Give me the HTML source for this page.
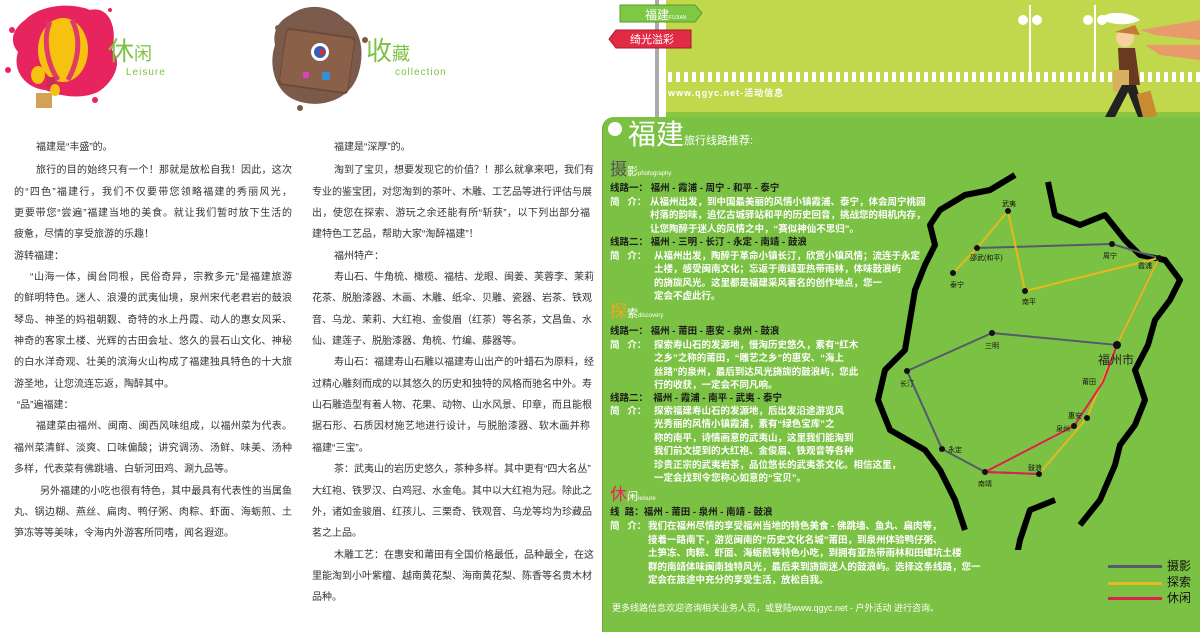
<!DOCTYPE html>
<html><head><meta charset="utf-8">
<style>
*{margin:0;padding:0;box-sizing:border-box}
body{width:1200px;height:632px;position:relative;overflow:hidden;background:#fff;font-family:"Liberation Sans","Noto Sans CJK SC",sans-serif}
.col{position:absolute;font-size:10px;color:#333;line-height:21.35px;width:278px}
.col div{white-space:nowrap}
.col .j{text-align:justify;text-align-last:justify}
.col .i{padding-left:22px}
.ab{position:absolute;white-space:nowrap}
.r{position:absolute;white-space:nowrap;font-size:9.5px;line-height:13.4px;color:#fff;font-weight:bold}
.k{color:#1a1a1a}
</style></head><body>

<svg class="ab" style="left:0;top:0" width="600" height="130">
 <path d="M25 20 C40 5 70 2 90 10 C110 5 118 30 112 50 C125 65 110 85 98 92 C80 100 60 96 45 90 C25 88 12 70 18 52 C8 40 14 28 25 20Z" fill="#e8245f"/>
 <circle cx="12" cy="30" r="3" fill="#e8245f"/><circle cx="110" cy="10" r="2" fill="#e8245f"/><circle cx="8" cy="70" r="3" fill="#e8245f"/><circle cx="95" cy="100" r="3" fill="#e8245f"/>
 <ellipse cx="63" cy="50" rx="25" ry="32" fill="#f7c20f"/>
 <path d="M50 22 C42 40 48 65 58 80 M72 20 C82 40 78 62 68 80" stroke="#e03a6b" stroke-width="5" fill="none"/>
 <rect x="47" y="77" width="8" height="10" fill="#c62d55"/>
 <rect x="36" y="93" width="16" height="15" fill="#d4a155"/>
 <ellipse cx="38" cy="75" rx="7" ry="9" fill="#f7c20f"/><ellipse cx="55" cy="90" rx="5" ry="6" fill="#f7c20f"/>
 <path d="M290 15 C310 0 335 8 345 20 C362 28 365 55 358 75 C350 100 320 110 295 100 C275 92 268 65 275 45 C272 30 280 20 290 15Z" fill="#7a5a4a"/>
 <circle cx="278" cy="28" r="3" fill="#7a5a4a"/><circle cx="365" cy="40" r="3" fill="#7a5a4a"/><circle cx="300" cy="108" r="3" fill="#7a5a4a"/>
 <rect x="282" y="32" width="70" height="58" rx="4" fill="#6e4a38" transform="rotate(8 317 61)"/>
 <rect x="283" y="34" width="68" height="54" rx="4" fill="#8a6148" transform="rotate(8 317 61)"/>
 <circle cx="320" cy="52" r="9" fill="#fff"/><circle cx="320" cy="52" r="6" fill="#3060c0"/><circle cx="322" cy="52" r="3" fill="#d03030"/>
 <rect x="322" y="72" width="8" height="8" fill="#3a8ed8"/><rect x="303" y="72" width="6" height="6" fill="#e040c0"/>
</svg>
<div class="ab" style="left:108px;top:36px;font-size:26px;color:#7dc242;line-height:30px">休<span style="font-size:18px">闲</span></div>
<div class="ab" style="left:126px;top:67px;font-size:10px;color:#7dc242;letter-spacing:1px">Leisure</div>
<div class="ab" style="left:366px;top:36px;font-size:26px;color:#7dc242;line-height:30px">收<span style="font-size:18px">藏</span></div>
<div class="ab" style="left:395px;top:67px;font-size:10px;color:#7dc242;letter-spacing:1px">collection</div>

<div class="col" style="left:14px;top:137px">
<div class="i">福建是“丰盛”的。</div>
<div class="i j" style="margin-top:2px">旅行的目的始终只有一个！那就是放松自我！因此，这次</div>
<div class="j">的“四色”福建行，我们不仅要带您领略福建的秀丽风光，</div>
<div class="j">更要带您“尝遍”福建当地的美食。就让我们暂时放下生活的</div>
<div>疲惫，尽情的享受旅游的乐趣！</div>
<div>游转福建：</div>
<div class="j" style="padding-left:16px">“山海一体，闽台同根，民俗奇异，宗教多元”是福建旅游</div>
<div class="j">的鲜明特色。迷人、浪漫的武夷仙境，泉州宋代老君岩的鼓浪</div>
<div class="j">琴岛、神圣的妈祖朝觐、奇特的水上丹霞、动人的惠女风采、</div>
<div class="j">神奇的客家土楼、光辉的古田会址、悠久的昙石山文化、神秘</div>
<div class="j">的白水洋奇观、壮美的滨海火山构成了福建独具特色的十大旅</div>
<div>游圣地，让您流连忘返，陶醉其中。</div>
<div>&nbsp;“品”遍福建：</div>
<div class="i j">福建菜由福州、闽南、闽西风味组成，以福州菜为代表。</div>
<div class="j">福州菜清鲜、淡爽、口味偏酸；讲究调汤、汤鲜、味美、汤种</div>
<div>多样，代表菜有佛跳墙、白斩河田鸡、涮九品等。</div>
<div class="j" style="padding-left:26px">另外福建的小吃也很有特色，其中最具有代表性的当属鱼</div>
<div class="j">丸、锅边糊、燕丝、扁肉、鸭仔粥、肉粽、虾面、海蛎煎、土</div>
<div>笋冻等等美味，令海内外游客所同嗜，闻名遐迩。</div>
</div>

<div class="col" style="left:312px;top:137px">
<div class="i">福建是“深厚”的。</div>
<div class="i j" style="margin-top:2px">淘到了宝贝，想要发现它的价值？！那么就拿来吧，我们有</div>
<div class="j">专业的鉴宝团，对您淘到的茶叶、木雕、工艺品等进行评估与展</div>
<div class="j">出，使您在探索、游玩之余还能有所“斩获”，以下列出部分福</div>
<div>建特色工艺品，帮助大家“淘醉福建”！</div>
<div class="i">福州特产：</div>
<div class="i j">寿山石、牛角梳、橄榄、福桔、龙眼、闽姜、芙蓉李、茉莉</div>
<div class="j">花茶、脱胎漆器、木画、木雕、纸伞、贝雕、瓷器、岩茶、铁观</div>
<div class="j">音、乌龙、茉莉、大红袍、金俊眉（红茶）等名茶，文昌鱼、水</div>
<div>仙、建莲子、脱胎漆器、角梳、竹编、藤器等。</div>
<div class="i j">寿山石：福建寿山石雕以福建寿山出产的叶蜡石为原料，经</div>
<div class="j">过精心雕刻而成的以其悠久的历史和独特的风格而驰名中外。寿</div>
<div class="j">山石雕造型有着人物、花果、动物、山水风景、印章，而且能根</div>
<div class="j">据石形、石质因材施艺地进行设计，与脱胎漆器、软木画并称</div>
<div>福建“三宝”。</div>
<div class="i j">茶：武夷山的岩历史悠久，茶种多样。其中更有“四大名丛”</div>
<div class="j">大红袍、铁罗汉、白鸡冠、水金龟。其中以大红袍为冠。除此之</div>
<div class="j">外，诸如金骏眉、红孩儿、三栗奇、铁观音、乌龙等均为珍藏品</div>
<div>茗之上品。</div>
<div class="i j">木雕工艺：在惠安和莆田有全国价格最低，品种最全，在这</div>
<div class="j">里能淘到小叶紫檀、越南黄花梨、海南黄花梨、陈香等名贵木材</div>
<div>品种。</div>
</div>

<div class="ab" style="left:666px;top:0;width:534px;height:117px;background:#c2d84c"></div>
<div class="ab" style="left:666px;top:112px;width:534px;height:6px;background:#8cc63f"></div>
<div class="ab" style="left:668px;top:72px;width:532px;height:10px;background:repeating-linear-gradient(90deg,#fff 0 4px,transparent 4px 8px)"></div>
<div class="ab" style="left:668px;top:86px;font-size:9px;color:#fff;letter-spacing:1px;font-weight:bold">www.qgyc.net-活动信息</div>
<div class="ab" style="left:655px;top:0;width:4px;height:117px;background:#aaa"></div>
<svg class="ab" style="left:600px;top:0" width="600" height="118">
 <path d="M20 5 H95 L102 13 L95 22 H20Z" fill="#7ec843" stroke="#5a9a30"/>
 <path d="M91 30 H16 L9 39 L16 48 H91Z" fill="#e32a45" stroke="#a01a30"/>
 <g stroke="#fff" stroke-width="2" fill="#fff">
  <line x1="430" y1="5" x2="430" y2="72"/><line x1="495" y1="5" x2="495" y2="72"/>
  <circle cx="423" cy="20" r="4"/><circle cx="437" cy="20" r="4"/><circle cx="488" cy="20" r="4"/><circle cx="502" cy="20" r="4"/>
 </g>
 <path d="M500 18 C510 10 530 12 540 20 C530 26 510 26 500 18Z" fill="#fff"/>
 <path d="M540 30 L600 20 L600 40 L555 35Z M545 45 L600 45 L600 60 L560 55Z" fill="#e89a6a"/>
 <circle cx="525" cy="38" r="9" fill="#f7d2a0"/>
 <path d="M515 32 L535 25 L540 35Z" fill="#c47a3a"/>
 <path d="M518 48 L535 48 L540 85 L520 85Z" fill="#6a3a20"/>
 <rect x="513" y="70" width="16" height="22" fill="#d8b060"/>
 <path d="M522 85 L505 117 L515 117 L528 92 L538 117 L546 117 L536 85Z" fill="#222"/>
 <rect x="540" y="92" width="14" height="26" fill="#c98a30" transform="rotate(-15 547 105)"/>
</svg>
<div class="ab" style="left:645px;top:6px;font-size:12px;color:#fff">福建<span style="font-size:5px">FUJIAN</span></div>
<div class="ab" style="left:630px;top:31px;font-size:11px;color:#fff">绮光溢彩</div>

<div class="ab" style="left:602px;top:117px;width:598px;height:515px;background:#7bc143;border-radius:12px 0 0 0;border-left:1px solid #6aa33a"></div>

<svg class="ab" style="left:870px;top:170px" width="330" height="380">
 <g fill="none" stroke="#000" stroke-width="6" stroke-linejoin="round">
  <path d="M145 5 L120 20 L95 25 L70 40 L60 55 L65 75 L55 95 L45 120 L40 150 L35 180 L15 200 L8 230 L20 260 L55 280 L70 300 L85 330 L95 360"/>
  <path d="M178 12 L185 45 L210 55 L235 45 L255 70 L270 85 L295 90 L310 110 L300 130 L285 150 L278 175 L265 200 L275 230 L265 255 L250 275 L245 295 L230 330 L210 355"/>
  <path d="M140 420 L150 370 L160 340 L185 330"/>
 </g>
 <g fill="none" stroke-width="2">
  <polyline stroke="#555b6a" points="107,78 242,74 289,88 247,175 122,163 37,201 72,279 115,302 169,304"/>
  <polyline stroke="#e8b820" points="83,103 107,78 138,41 155,121 289,88 247,175 217,248 169,304"/>
  <polyline stroke="#e02050" points="247,175 233,212 204,256 115,302 169,304"/>
 </g>
 <g fill="#111"><circle cx="138" cy="41" r="3"/><circle cx="107" cy="78" r="3"/><circle cx="83" cy="103" r="3"/><circle cx="155" cy="121" r="3"/><circle cx="242" cy="74" r="3"/><circle cx="289" cy="88" r="3"/><circle cx="122" cy="163" r="3"/><circle cx="247" cy="175" r="4"/><circle cx="37" cy="201" r="3"/><circle cx="217" cy="248" r="3"/><circle cx="204" cy="256" r="3"/><circle cx="72" cy="279" r="3"/><circle cx="115" cy="302" r="3"/><circle cx="169" cy="304" r="3"/></g>
 <g font-size="7" fill="#111" font-family="Liberation Sans,Noto Sans CJK SC,sans-serif">
  <text x="132" y="36">武夷</text><text x="100" y="90">邵武(和平)</text><text x="80" y="117">泰宁</text><text x="152" y="134">南平</text><text x="233" y="88">周宁</text><text x="268" y="98">霞浦</text><text x="115" y="178">三明</text><text x="30" y="216">长汀</text><text x="212" y="214">莆田</text><text x="198" y="248">惠安</text><text x="186" y="261">泉州</text><text x="78" y="282">永定</text><text x="108" y="316">南靖</text><text x="158" y="300">鼓浪</text>
  <text x="228" y="194" font-size="12" fill="#222">福州市</text>
 </g>
</svg>

<div class="ab" style="left:608px;top:122px;width:14px;height:14px;border-radius:50%;background:#fff"></div>
<div class="ab" style="left:628px;top:117px;font-size:28px;color:#fff;line-height:36px">福建<span style="font-size:11px">旅行线路推荐:</span></div>
<div class="ab" style="left:610px;top:160px;font-size:17px;color:#555;line-height:20px">摄<span style="font-size:11px;color:#fff">影<span style="font-size:6px">photography</span></span></div>

<div class="r k" style="left:610px;top:182px">线路一：&nbsp;福州 - 霞浦 - 周宁 - 和平 - 泰宁</div>
<div class="r" style="left:610px;top:196px">简&nbsp;&nbsp;&nbsp;介：</div>
<div class="r" style="left:650px;top:196px">从福州出发，到中国最美丽的风情小镇霞浦、泰宁，体会周宁桃园<br>村落的韵味，追忆古城驿站和平的历史回音，挑战您的相机内存，<br>让您陶醉于迷人的风情之中，“赛似神仙不思归”。</div>
<div class="r k" style="left:610px;top:236px">线路二：&nbsp;福州 - 三明 - 长汀 - 永定 - 南靖 - 鼓浪</div>
<div class="r" style="left:610px;top:250px">简&nbsp;&nbsp;&nbsp;介：</div>
<div class="r" style="left:654px;top:250px">从福州出发，陶醉于革命小镇长汀，欣赏小镇风情；流连于永定<br>土楼，感受闽南文化；忘返于南靖亚热带雨林，体味鼓浪屿<br>的旖旎风光。这里都是福建采风著名的创作地点，您一<br>定会不虚此行。</div>

<div class="ab" style="left:610px;top:302px;font-size:17px;color:#f2a81d;line-height:20px">探<span style="font-size:11px;color:#fff">索<span style="font-size:6px">discovery</span></span></div>
<div class="r k" style="left:610px;top:325px">线路一：&nbsp;福州 - 莆田 - 惠安 - 泉州 - 鼓浪</div>
<div class="r" style="left:610px;top:339px">简&nbsp;&nbsp;&nbsp;介：</div>
<div class="r" style="left:654px;top:339px">探索寿山石的发源地，慢淘历史悠久，素有“红木<br>之乡”之称的莆田，“雕艺之乡”的惠安、“海上<br>丝路”的泉州，最后到达风光旖旎的鼓浪屿，您此<br>行的收获，一定会不同凡响。</div>
<div class="r k" style="left:610px;top:392px">线路二：&nbsp;&nbsp;福州 - 霞浦 - 南平 - 武夷 - 泰宁</div>
<div class="r" style="left:610px;top:405px">简&nbsp;&nbsp;&nbsp;介：</div>
<div class="r" style="left:654px;top:405px">探索福建寿山石的发源地，后出发沿途游览风<br>光秀丽的风情小镇霞浦，素有“绿色宝库”之<br>称的南平，诗情画意的武夷山，这里我们能淘到<br>我们前文提到的大红袍、金俊眉、铁观音等各种<br>珍贵正宗的武夷岩茶，品位悠长的武夷茶文化。相信这里，<br>一定会找到令您称心如意的“宝贝”。</div>

<div class="ab" style="left:610px;top:485px;font-size:17px;color:#e8245f;line-height:20px">休<span style="font-size:11px;color:#fff">闲<span style="font-size:6px">leisure</span></span></div>
<div class="r k" style="left:610px;top:506px">线&nbsp;&nbsp;路：福州 - 莆田 - 泉州 - 南靖 - 鼓浪</div>
<div class="r" style="left:610px;top:520px">简&nbsp;&nbsp;&nbsp;介：</div>
<div class="r" style="left:648px;top:520px;line-height:13.5px">我们在福州尽情的享受福州当地的特色美食 - 佛跳墙、鱼丸、扁肉等，<br>接着一路南下，游览闽南的“历史文化名城”莆田，到泉州体验鸭仔粥、<br>土笋冻、肉粽、虾面、海蛎煎等特色小吃，到拥有亚热带雨林和田螺坑土楼<br>群的南靖体味闽南独特风光，最后来到旖旎迷人的鼓浪屿。选择这条线路，您一<br>定会在旅途中充分的享受生活，放松自我。</div>
<div class="ab" style="left:612px;top:601px;font-size:9px;color:#fff">更多线路信息欢迎咨询相关业务人员，或登陆www.qgyc.net - 户外活动 进行咨询。</div>

<div class="ab" style="left:1108px;top:565px;width:54px;height:3px;background:#555b6a"></div>
<div class="ab" style="left:1108px;top:582px;width:54px;height:3px;background:#e8b820"></div>
<div class="ab" style="left:1108px;top:597px;width:54px;height:3px;background:#e02050"></div>
<div class="ab" style="left:1167px;top:558px;font-size:12px;line-height:16px;color:#111">摄影<br>探索<br>休闲</div>
</body></html>
